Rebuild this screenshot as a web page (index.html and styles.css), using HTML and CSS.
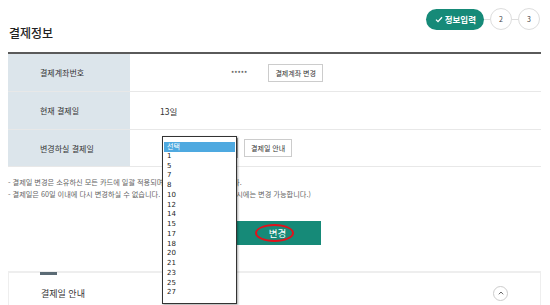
FILE: index.html
```html
<!DOCTYPE html>
<html lang="ko">
<head>
    <meta charset="UTF-8">
    <title>결제정보</title>
    <link rel="stylesheet" href="styles.css">
</head>
<body>
<div id="page">
    <div id="header">
        <h1>결제정보</h1>
        <div class="steps">
            <span class="step-on">
                <svg width="8" height="7" viewBox="0 0 8 7"><path d="M1 3.6 L3 5.6 L7 1.2" fill="none" stroke="#fff" stroke-width="1.3"/></svg>
                정보입력
            </span>
            <span class="step-line"></span>
            <span class="step">2</span>
            <span class="step-line"></span>
            <span class="step">3</span>
        </div>
    </div>

    <table class="info">
        <tr>
            <th>결제계좌번호</th>
            <td class="account">
                <span class="mask">*****</span>
                <button type="button" class="small-btn">결제계좌 변경</button>
            </td>
        </tr>
        <tr>
            <th>현재 결제일</th>
            <td class="plain">13일</td>
        </tr>
        <tr>
            <th>변경하실 결제일</th>
            <td class="day">
                <div class="picker">
                    <span class="select-box"></span>
                    <button type="button" class="small-btn">결제일 안내</button>
                    <ul class="listbox">
                        <li class="sel">선택</li>
                        <li>1</li>
                        <li>5</li>
                        <li>7</li>
                        <li>8</li>
                        <li>10</li>
                        <li>12</li>
                        <li>14</li>
                        <li>15</li>
                        <li>17</li>
                        <li>18</li>
                        <li>20</li>
                        <li>21</li>
                        <li>23</li>
                        <li>25</li>
                        <li>27</li>
                    </ul>
                </div>
            </td>
        </tr>
    </table>

    <ul class="notes">
        <li>- 결제일 변경은 소유하신 모든 카드에 일괄 적용되며, 즉시 변경될 수 있습니다.</li>
        <li>- 결제일은 60일 이내에 다시 변경하실 수 없습니다. (단, 신규 카드 최초 발급 시에는 변경 가능합니다.)</li>
    </ul>

    <div class="actions">
        <button type="button" class="submit">변경<span class="mark"></span></button>
    </div>

    <div class="guide">
        <span class="guide-tab"></span>
        <span class="guide-title">결제일 안내</span>
        <span class="toggle">
            <svg width="6" height="4" viewBox="0 0 6 4"><path d="M0.8 3.3 L3 1 L5.2 3.3" fill="none" stroke="#666" stroke-width="1"/></svg>
        </span>
    </div>
</div>
</body>
</html>
```

FILE: styles.css
```css
body {
    margin: 0;
    color: #333;
    font-family: "Noto Sans CJK KR", "Noto Sans", sans-serif;
    font-size: 8px;
    background: #fff;
}

#page {
    width: 533px;
    padding: 0 9px 0 8px;
}

#header {
    display: flex;
    justify-content: space-between;
    align-items: flex-start;
    height: 52px;
    border-bottom: 2px solid #5a5a5a;
}

h1 {
    margin: 24px 0 0 1px;
    font-size: 12px;
    font-weight: 500;
    color: #222;
}

.steps {
    display: flex;
    align-items: center;
    margin-top: 8px;
    margin-right: 1px;
}

.step-on {
    display: flex;
    align-items: center;
    gap: 2px;
    height: 21px;
    padding: 0 8px 0 9px;
    border-radius: 11px;
    background: #168a78;
    color: #fff;
    font-size: 8.5px;
    font-weight: 700;
}

.step {
    display: flex;
    align-items: center;
    justify-content: center;
    width: 20px;
    height: 20px;
    border: 1px solid #ddd;
    border-radius: 50%;
    font-size: 7px;
    color: #444;
}

.step-line {
    width: 6px;
    border-top: 1px solid #ddd;
}

.info {
    width: 100%;
    border-collapse: collapse;
}

.info th,
.info td {
    border-bottom: 1px solid #e8e8e8;
    font-weight: normal;
    text-align: left;
    height: 37px;
    padding: 0;
}

.info th {
    width: 90px;
    padding-left: 32px;
    background: #dce5eb;
    color: #333;
    font-size: 8px;
}

.info td {
    color: #333;
    font-size: 8.5px;
}

.info tr:last-child th,
.info tr:last-child td {
    height: 36px;
}

.account {
    padding-left: 101px !important;
}

.mask {
    display: inline-block;
    width: 35px;
    font-size: 7px;
    vertical-align: middle;
}

.plain {
    padding-left: 30px !important;
}

.day {
    padding-left: 32px !important;
}

.small-btn {
    height: 18px;
    padding: 0 6px;
    border: 1px solid #ccc;
    background: #fff;
    color: #333;
    font-family: inherit;
    font-size: 7px;
    vertical-align: middle;
}

.picker {
    position: relative;
    display: flex;
    align-items: center;
    gap: 6px;
}

.select-box {
    width: 74px;
    height: 18px;
    border: 1px solid #aaa;
}

.listbox {
    position: absolute;
    left: 0;
    top: -2px;
    width: 73px;
    height: 161px;
    margin: 0;
    padding: 5px 0 0;
    list-style: none;
    background: #fff;
    border: 1px solid #333;
    box-shadow: 1px 1px 2px rgba(0, 0, 0, 0.35);
    font-family: "DejaVu Sans", sans-serif;
    font-size: 7px;
    z-index: 2;
}

.listbox li {
    height: 9.75px;
    line-height: 9.75px;
    padding-left: 4px;
    color: #222;
}

.listbox li.sel {
    margin: 0 1px;
    padding-left: 3px;
    background: #4ea9e0;
    color: #fff;
    font-family: "Noto Sans CJK KR", sans-serif;
}

.notes {
    margin: 0;
    padding: 9px 0 0;
    list-style: none;
    color: #666;
    font-size: 7.2px;
    line-height: 12px;
}

.actions {
    display: flex;
    justify-content: center;
    padding: 21px 0 26px 6px;
    border-bottom: 1px solid #eee;
}

.submit {
    position: relative;
    width: 86px;
    height: 24px;
    border: 0;
    background: #168a78;
    color: #fff;
    font-family: inherit;
    font-size: 9.5px;
}

.mark {
    position: absolute;
    left: 20px;
    top: 3px;
    width: 35px;
    height: 14px;
    border: 2.5px solid #e0121b;
    border-radius: 50%;
}

.guide {
    position: relative;
    display: flex;
    align-items: center;
    justify-content: space-between;
    height: 40px;
    padding: 0 32px 0 32px;
    border: 1px solid #eee;
    border-bottom: 0;
}

.guide-tab {
    position: absolute;
    left: 31px;
    top: -1px;
    width: 17px;
    height: 3px;
    background: #5b6b75;
}

.guide-title {
    font-size: 9px;
    color: #333;
}

.toggle {
    display: flex;
    align-items: center;
    justify-content: center;
    width: 13px;
    height: 13px;
    border: 1px solid #ccc;
    border-radius: 50%;
}
```
